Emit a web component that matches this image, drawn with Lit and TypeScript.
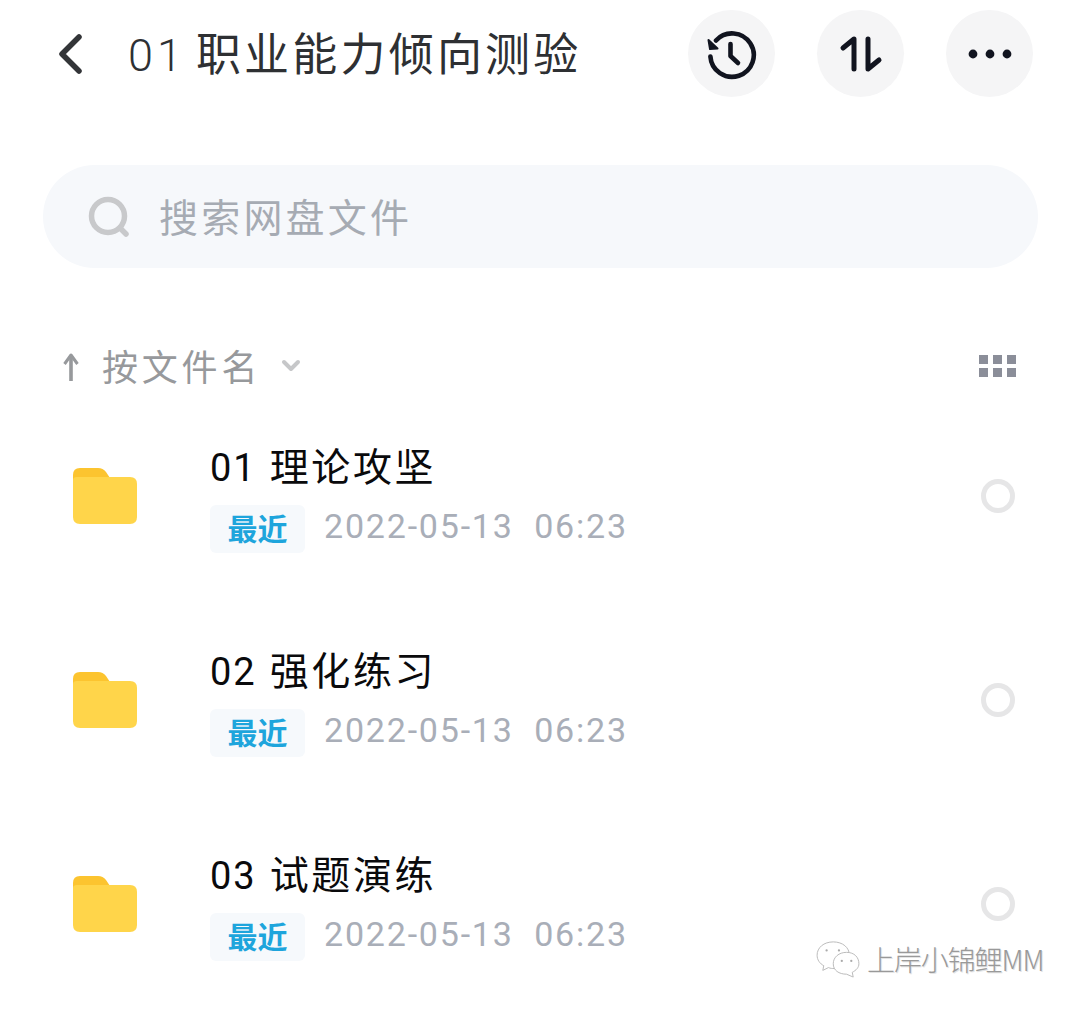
import { LitElement, html, css } from "lit";
import { customElement } from "lit/decorators.js";

const rows = [
  { num: "01", name: "理论攻坚" },
  { num: "02", name: "强化练习" },
  { num: "03", name: "试题演练" },
];

@customElement("app-root")
export class AppRoot extends LitElement {
  static styles = css`
    :host { display: block; width: 1080px; height: 1009px; background: #fff; font-family: "Noto Sans CJK SC", "Noto Sans", sans-serif; position: relative; overflow: hidden; }
    .page { display:flex; flex-direction:column; height:1009px; box-sizing:border-box; padding-top:10px; }
    .top { display:flex; align-items:center; height:87px; padding:0 47px 0 56px; flex:none; }
    .back { flex:none; }
    .title { margin-left:44px; font-size:45px; letter-spacing:3.2px; color:#2e3033; line-height:86px; white-space:nowrap; }
    .num { font-family:"Roboto",sans-serif; font-size:45px; font-weight:300; letter-spacing:4px; margin-right:10px; }
    .btns { margin-left:auto; display:flex; gap:42px; }
    .btn { width:87px; height:87px; border-radius:50%; background:#f5f5f6; display:flex; align-items:center; justify-content:center; }
    .search { margin:68px 42px 0 43px; height:103px; border-radius:52px; background:#f6f8fb; display:flex; align-items:center; padding-left:45px; flex:none; }
    .search-text { margin-left:29px; font-size:39px; letter-spacing:3.2px; color:#a6abb3; padding-bottom:3px; }
    .sort { display:flex; align-items:center; margin-top:72px; padding:0 64px 0 61px; height:54px; flex:none; }
    .sort-text { margin-left:21px; font-size:36px; letter-spacing:3.8px; color:#97999c; padding-bottom:4px; }
    .chev { margin-left:20px; margin-bottom:3px; }
    .grid { margin-left:auto; margin-bottom:2px; display:grid; grid-template-columns:repeat(3,9px); grid-auto-rows:9px; column-gap:5px; row-gap:4px; }
    .grid i { background:#8b8e99; }
    .list { display:flex; flex-direction:column; margin-top:24px; }
    .row { display:flex; align-items:center; height:204px; box-sizing:border-box; padding:0 65px 52px 72px; flex:none; }
    .folder { flex:none; margin-top:4px; }
    .info { margin-left:72px; display:flex; flex-direction:column; }
    .name { font-size:39px; letter-spacing:2.6px; color:#0a0a0c; line-height:58px; white-space:nowrap; }
    .name-num { font-family:"Roboto",sans-serif; font-size:38px; letter-spacing:2px; margin-right:13px; }
    .meta { display:flex; align-items:center; margin-top:8px; }
    .tag { width:95px; height:48px; box-sizing:border-box; padding-bottom:5px; border-radius:6px; background:#f6f9fc; color:#1ea5dc; font-size:30px; font-weight:700; display:flex; align-items:center; justify-content:center; }
    .date { margin-left:19px; font-family:"Roboto",sans-serif; font-size:34px; letter-spacing:1.8px; color:#a9aeb8; padding-bottom:6px; }
    .radio { margin-left:auto; width:34px; height:34px; box-sizing:border-box; border:5px solid #e6e6e7; border-radius:50%; margin-top:4px; }
    .mark { position:absolute; left:816px; top:939px; display:flex; align-items:center; gap:7px; }
    .mark-text { font-size:28px; font-weight:300; color:#999; white-space:nowrap; letter-spacing:-1.1px; text-shadow:1px 1px 0 #e4e4e4; }
  `;
  render() {
    return html`<div class="page">
      <header class="top">
        <svg class="back" width="28" height="42" viewBox="0 0 28 42"><path d="M23 4 L6 21 L23 38" fill="none" stroke="#333538" stroke-width="5.5" stroke-linecap="round" stroke-linejoin="round"/></svg>
        <div class="title"><span class="num">01</span>职业能力倾向测验</div>
        <div class="btns">
          <div class="btn"><svg width="54" height="54" viewBox="0 0 54 54" fill="none" stroke="#11141f" stroke-width="4.6" stroke-linecap="round" stroke-linejoin="round">
            <path d="M5.4 29.5 A 21.7 21.7 0 1 0 11 13.5"/><path d="M3.5 13 L5 22 L12.5 21.5 Z" fill="#11141f" stroke-width="2"/><path d="M25.5 17 V29 L33 36"/></svg></div>
          <div class="btn"><svg width="46" height="46" viewBox="0 0 46 46" fill="none" stroke="#11141f" stroke-width="5" stroke-linecap="round" stroke-linejoin="round">
            <path d="M16 38 V8 L5 17"/><path d="M30 8 V38 L41 29"/></svg></div>
          <div class="btn"><svg width="46" height="12" viewBox="0 0 46 12" fill="#11141f"><circle cx="6" cy="6" r="4.4"/><circle cx="23" cy="6" r="4.4"/><circle cx="40" cy="6" r="4.4"/></svg></div>
        </div>
      </header>
      <div class="search">
        <svg width="42" height="42" viewBox="0 0 42 42" fill="none" stroke="#c8c9cb" stroke-width="5.5" stroke-linecap="round"><circle cx="20" cy="20" r="16.5"/><path d="M32 32 L38 38"/></svg>
        <span class="search-text">搜索网盘文件</span>
      </div>
      <div class="sort">
        <svg class="up" width="20" height="30" viewBox="0 0 20 30" fill="none" stroke="#97999c" stroke-width="3.6" stroke-linejoin="round"><path d="M10 29 V4"/><path d="M3.5 12 L10 3 L16.5 12" stroke-width="3"/></svg>
        <span class="sort-text">按文件名</span>
        <svg class="chev" width="20" height="14" viewBox="0 0 20 14" fill="none" stroke="#c6c7c9" stroke-width="4" stroke-linecap="round" stroke-linejoin="round"><path d="M3 3 L10 10 L17 3"/></svg>
        <div class="grid">${[0,1,2,3,4,5].map(() => html`<i></i>`)}</div>
      </div>
      <div class="list">
        ${rows.map(r => html`<div class="row">
          <svg class="folder" width="66" height="58" viewBox="0 0 66 58">
            <path d="M1 8 Q1 1 8 1 H26 Q31 1 34 5 L38 11 H30 L1 14 Z" fill="#fcc42f"/>
            <path d="M1 13 Q1 10 5 10 H58 Q65 10 65 17 V50 Q65 57 58 57 H8 Q1 57 1 50 Z" fill="#ffd54a"/>
          </svg>
          <div class="info">
            <div class="name"><span class="name-num">${r.num}</span>${r.name}</div>
            <div class="meta"><span class="tag">最近</span><span class="date">2022-05-13&nbsp;&nbsp;06:23</span></div>
          </div>
          <span class="radio"></span>
        </div>`)}
      </div>
      <div class="mark">
        <svg width="44" height="38" viewBox="0 0 46 40" fill="#fff" stroke="#b8b8b8" stroke-width="1">
          <path d="M18 2 C8 2 1 8 1 16 C1 21 4 25 8 27 L7 32 L13 29 C15 30 17 30 19 30 C30 30 35 24 35 16 C35 8 28 2 18 2 Z"/>
          <path d="M32 13 C24 13 18 18 18 25 C18 32 24 36 32 36 L39 39 L38 34 C42 32 45 29 45 25 C45 18 40 13 32 13 Z"/>
          <circle cx="11" cy="11" r="1.2" fill="#aaa" stroke="none"/><circle cx="24" cy="11" r="1.2" fill="#aaa" stroke="none"/>
          <circle cx="27" cy="22" r="1.2" fill="#aaa" stroke="none"/><circle cx="37" cy="22" r="1.2" fill="#aaa" stroke="none"/>
        </svg>
        <span class="mark-text">上岸小锦鲤MM</span>
      </div>
    </div>`;
  }
}
